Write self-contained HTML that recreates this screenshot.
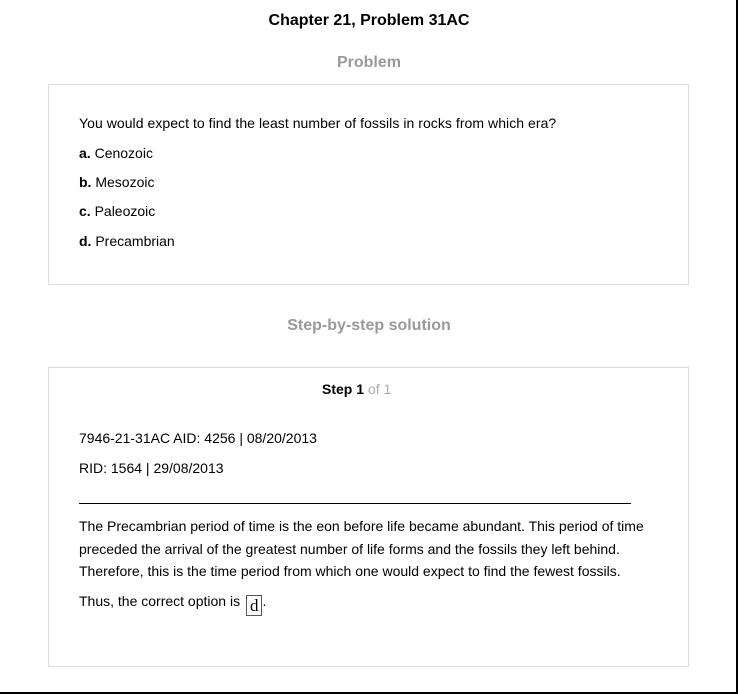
<!DOCTYPE html>
<html><head><meta charset="utf-8"><style>
*{margin:0;padding:0;box-sizing:border-box}
body{width:738px;height:694px;background:#fff;font-family:"Liberation Sans",Arial,sans-serif;font-size:14px;color:#000;position:relative;overflow:hidden}
.t{position:absolute;white-space:nowrap;line-height:16px}
.box{position:absolute;left:48px;width:641px;border:1px solid #ddd}
.c{left:0;width:738px;text-align:center}
</style></head><body>
<div style="position:absolute;left:736px;top:0;width:2px;height:694px;background:#000"></div>
<div style="position:absolute;left:0;top:692px;width:738px;height:2px;background:#000"></div>
<div class="t c" style="top:13px;font-size:16px;font-weight:bold">Chapter 21, Problem 31AC</div>
<div class="t c" style="top:55px;font-size:16px;font-weight:bold;color:#999">Problem</div>
<div class="box" style="top:84px;height:201px"></div>
<div class="t" style="left:79px;top:115px;letter-spacing:0.05px">You would expect to find the least number of fossils in rocks from which era?</div>
<div class="t" style="left:79px;top:145px"><b>a.</b> Cenozoic</div>
<div class="t" style="left:79px;top:174px"><b>b.</b> Mesozoic</div>
<div class="t" style="left:79px;top:203px"><b>c.</b> Paleozoic</div>
<div class="t" style="left:79px;top:233px"><b>d.</b> Precambrian</div>
<div class="t c" style="top:318px;font-size:16px;font-weight:bold;color:#999">Step-by-step solution</div>
<div class="box" style="top:367px;height:300px"></div>
<div class="t" style="left:322px;top:381px"><b>Step 1</b> <span style="color:#aaa">of 1</span></div>
<div class="t" style="left:79px;top:430px">7946-21-31AC AID: 4256 | 08/20/2013</div>
<div class="t" style="left:79px;top:460px">RID: 1564 | 29/08/2013</div>
<div style="position:absolute;left:79px;top:503px;width:552px;height:1px;background:#000"></div>
<div class="t" style="left:79px;top:518px">The Precambrian period of time is the eon before life became abundant. This period of time</div>
<div class="t" style="left:79px;top:541px">preceded the arrival of the greatest number of life forms and the fossils they left behind.</div>
<div class="t" style="left:79px;top:563px">Therefore, this is the time period from which one would expect to find the fewest fossils.</div>
<div class="t" style="left:79px;top:593px">Thus, the correct option is <span style="display:inline-block;border:1px solid #555;font-family:'Liberation Serif',serif;font-size:17px;padding:0 3px;line-height:19px;vertical-align:-5px;margin-left:2px">d</span>.</div>
</body></html>
